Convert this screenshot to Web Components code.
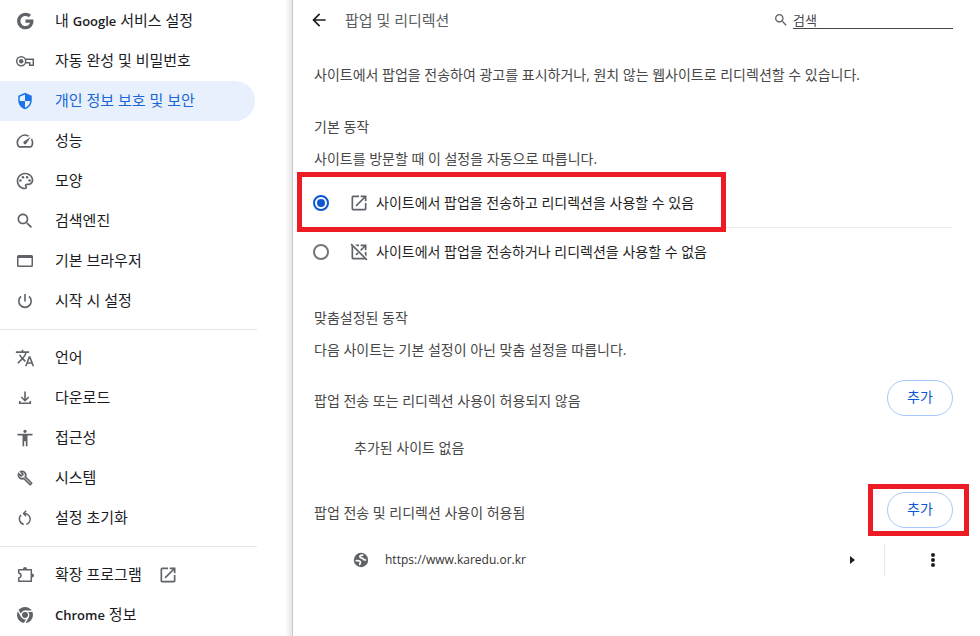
<!DOCTYPE html>
<html lang="ko">
<head>
<meta charset="utf-8">
<title>설정 - 팝업 및 리디렉션</title>
<style>
  html, body { height: 100%; }
  body {
    margin: 0;
    background: #fff;
    color: #1f1f1f;
    font-family: "Open Sans", "Noto Sans CJK KR", sans-serif;
    font-size: 14px;
    line-height: 20px;
    overflow: hidden;
  }
  menu-item b { font-size: 13px; font-weight: 600; }
</style>
</head>
<body>
<settings-app>
  <settings-menu slot="menu">
    <menu-item icon="google">내 <b>Google</b> 서비스 설정</menu-item>
    <menu-item icon="key">자동 완성 및 비밀번호</menu-item>
    <menu-item icon="shield" active>개인 정보 보호 및 보안</menu-item>
    <menu-item icon="speed">성능</menu-item>
    <menu-item icon="palette">모양</menu-item>
    <menu-item icon="search">검색엔진</menu-item>
    <menu-item icon="browser">기본 브라우저</menu-item>
    <menu-item icon="power">시작 시 설정</menu-item>
    <menu-divider></menu-divider>
    <menu-item icon="translate">언어</menu-item>
    <menu-item icon="download">다운로드</menu-item>
    <menu-item icon="accessibility">접근성</menu-item>
    <menu-item icon="wrench">시스템</menu-item>
    <menu-item icon="reset">설정 초기화</menu-item>
    <menu-divider></menu-divider>
    <menu-item icon="extension" external>확장 프로그램</menu-item>
    <menu-item icon="chrome"><b>Chrome</b> 정보</menu-item>
  </settings-menu>

  <page-header>팝업 및 리디렉션</page-header>
  <page-intro>사이트에서 팝업을 전송하여 광고를 표시하거나, 원치 않는 웹사이트로 리디렉션할 수 있습니다.</page-intro>
  <settings-section heading="기본 동작" note="사이트를 방문할 때 이 설정을 자동으로 따릅니다.">
    <popup-choice></popup-choice>
  </settings-section>
  <settings-section heading="맞춤설정된 동작" note="다음 사이트는 기본 설정이 아닌 맞춤 설정을 따릅니다.">
    <site-list heading="팝업 전송 또는 리디렉션 사용이 허용되지 않음">
      <empty-note>추가된 사이트 없음</empty-note>
    </site-list>
    <site-list heading="팝업 전송 및 리디렉션 사용이 허용됨" marked>
      <site-row>https://www.karedu.or.kr</site-row>
    </site-list>
  </settings-section>
</settings-app>

<script>
const ICONS = {
  google: '<svg viewBox="0 0 24 24"><path d="M12.545 10.239v3.821h5.445c-.712 2.315-2.647 3.972-5.445 3.972-3.332 0-6.033-2.701-6.033-6.032s2.701-6.032 6.033-6.032c1.498 0 2.866.549 3.921 1.453l2.814-2.814C17.503 2.988 15.139 2 12.545 2 7.021 2 2.543 6.477 2.543 12s4.478 10 10.002 10c8.396 0 10.249-7.85 9.426-11.748z"/></svg>',
  key: '<svg viewBox="0 0 20 20"><g fill="none" stroke="currentColor" stroke-width="1.500"><path d="M10.400 8.200H18.300V14.300H14.700V11.800H10.400"/><circle cx="6.200" cy="10.300" r="4.500"/></g><circle cx="6.200" cy="10.300" r="2.200"/></svg>',
  shield: '<svg viewBox="0 0 24 24"><path transform="translate(1.200 1.200) scale(.9)" d="M12 1L3 5v6c0 5.550 3.840 10.740 9 12 5.160-1.260 9-6.450 9-12V5l-9-4zm0 10.990h7c-.53 4.120-3.280 7.790-7 8.940V12H5V6.300l7-3.110v8.800z"/></svg>',
  speed: '<svg viewBox="0 0 24 24"><path d="M20.380 8.570l-1.230 1.850a8 8 0 0 1-.22 7.580H5.070A8 8 0 0 1 15.580 6.850l1.850-1.230A10 10 0 0 0 3.350 19a2 2 0 0 0 1.720 1h13.850a2 2 0 0 0 1.740-1 10 10 0 0 0-.27-10.440z"/><path d="M10.590 15.410a2 2 0 0 0 2.830 0l5.660-8.490-8.490 5.660a2 2 0 0 0 0 2.830z"/></svg>',
  palette: '<svg viewBox="0 0 24 24"><path d="M12 22C6.490 22 2 17.510 2 12S6.490 2 12 2s10 4.040 10 9c0 3.310-2.690 6-6 6h-1.770c-.28 0-.5.22-.5.5 0 .12.05.23.13.33.41.47.64 1.060.64 1.670A2.500 2.500 0 0 1 12 22zm0-18c-4.410 0-8 3.590-8 8s3.590 8 8 8c.28 0 .5-.22.5-.5a.54.54 0 0 0-.14-.35c-.41-.46-.63-1.050-.63-1.650a2.500 2.500 0 0 1 2.500-2.500H16c2.210 0 4-1.790 4-4 0-3.860-3.590-7-8-7z"/><circle cx="6.500" cy="11.500" r="1.500"/><circle cx="9.500" cy="7.500" r="1.500"/><circle cx="14.500" cy="7.500" r="1.500"/><circle cx="17.500" cy="11.500" r="1.500"/></svg>',
  search: '<svg viewBox="0 0 24 24"><path d="M15.500 14h-.79l-.28-.27C15.410 12.590 16 11.110 16 9.500 16 5.910 13.090 3 9.500 3S3 5.910 3 9.500 5.910 16 9.500 16c1.610 0 3.090-.59 4.230-1.570l.27.28v.79l5 4.990L20.490 19l-4.990-5zm-6 0C7.010 14 5 11.990 5 9.500S7.010 5 9.500 5 14 7.010 14 9.500 11.990 14 9.500 14z"/></svg>',
  browser: '<svg viewBox="0 0 20 20"><path fill-rule="evenodd" d="M3.500 4h13A1.500 1.500 0 0 1 18 5.500v9a1.500 1.500 0 0 1-1.500 1.500h-13A1.500 1.500 0 0 1 2 14.500v-9A1.500 1.500 0 0 1 3.500 4zM3.500 7v7.500h13V7z"/></svg>',
  power: '<svg viewBox="0 0 20 20"><path fill="none" stroke="currentColor" stroke-width="1.600" d="M10 3v7.500M6 5.400A6.200 6.200 0 1 0 14 5.400"/></svg>',
  translate: '<svg viewBox="0 0 24 24"><path d="M12.870 15.070l-2.540-2.510.03-.03c1.740-1.940 2.980-4.170 3.710-6.530H17V4h-7V2H8v2H1v1.990h11.170C11.500 7.920 10.440 9.750 9 11.350 8.070 10.320 7.300 9.190 6.690 8h-2c.73 1.630 1.730 3.170 2.980 4.560l-5.090 5.020L4 19l5-5 3.110 3.110.76-2.040zM18.500 10h-2L12 22h2l1.120-3h4.750L21 22h2l-4.500-12zm-2.620 7l1.620-4.330L19.120 17h-3.240z"/></svg>',
  download: '<svg viewBox="0 0 20 20"><path fill="none" stroke="currentColor" stroke-width="1.600" d="M10 3.500v9M6.300 9l3.700 3.700L13.700 9M4.700 13v2.300h10.600V13"/></svg>',
  accessibility: '<svg viewBox="0 0 24 24"><path d="M12 2c1.100 0 2 .9 2 2s-.9 2-2 2-2-.9-2-2 .9-2 2-2zm9 7h-6v13h-2v-6h-2v6H9V9H3V7h18v2z"/></svg>',
  wrench: '<svg viewBox="0 0 24 24"><path stroke="currentColor" stroke-width=".6" d="M22.610 18.990l-9.080-9.080c.93-2.340.45-5.100-1.440-7C9.790.61 6.210.4 3.660 2.260L7.500 6.110 6.080 7.520 2.250 3.690C.39 6.230.6 9.820 2.900 12.110c1.860 1.860 4.570 2.350 6.890 1.480l9.110 9.110c.39.39 1.020.39 1.410 0l2.300-2.300c.4-.38.4-1.010 0-1.410zm-3 1.600l-9.460-9.460c-.61.45-1.290.72-2 .82-1.360.2-2.790-.21-3.830-1.250C3.370 9.760 2.930 8.500 3 7.260l3.090 3.090 4.240-4.240-3.090-3.090c1.240-.07 2.490.37 3.440 1.310 1.080 1.080 1.490 2.570 1.240 3.960-.12.71-.42 1.370-.88 1.960l9.450 9.450-.88.89z" transform="translate(2.500 2.500) scale(.8)"/></svg>',
  reset: '<svg viewBox="0 0 20 20"><path fill="none" stroke="currentColor" stroke-width="1.500" d="M8.800 16.400A5.600 5.600 0 0 1 6 7M9 5.500A5.600 5.600 0 0 1 11.300 16.400M11.200 2.800L8.500 5.500 11.200 8.200"/></svg>',
  extension: '<svg viewBox="0 0 20 20"><path fill="none" stroke="currentColor" stroke-width="1.500" stroke-linejoin="round" d="M3.700 4.700H16.300V16.300H3.700V13Q6 12.500 6 10.500T3.700 8z"/><path d="M8 4a2 2 0 0 1 4 0zM17 8.500a2 2 0 0 1 0 4z"/></svg>',
  chrome: '<svg viewBox="0 0 20 20"><circle cx="10" cy="10" r="8"/><g fill="none" stroke="#fff" stroke-width="1.400"><circle cx="10" cy="10" r="3.700"/><path d="M10 6.300h8M6.800 11.850L2.800 4.920M13.200 11.850L9.200 18.780"/></g></svg>',
  open: '<svg viewBox="0 0 24 24"><path d="M19 19H5V5h7V3H5a2 2 0 0 0-2 2v14a2 2 0 0 0 2 2h14c1.100 0 2-.9 2-2v-7h-2v7zM14 3v2h3.590l-9.830 9.830 1.410 1.410L19 6.410V10h2V3h-7z"/></svg>',
  blocked: '<svg viewBox="0 0 24 24"><path d="M5 6v13h13l2 2H5a2 2 0 0 1-2-2V4zM7.500 3H12v2H9.500zM14 3h7v7h-2V6.410l-4.300 4.300-1.410-1.410L17.590 5H14zM21 12v5.500l-2-2V12zM10.200 12.400l1.410 1.410-2.440 2.430-1.410-1.410z"/><path d="M3.200 1.800L22.200 20.800 20.800 22.200 1.800 3.200z"/></svg>',
  back: '<svg viewBox="0 0 24 24"><path d="M20 11H7.830l5.590-5.590L12 4l-8 8 8 8 1.410-1.410L7.830 13H20v-2z"/></svg>',
  globe: '<svg viewBox="0 0 20 20"><circle cx="10" cy="10" r="7.200"/><g fill="none" stroke="#fff" stroke-width="1.700" stroke-linecap="round" stroke-linejoin="round"><path d="M11.600 5.200C9 5.400 8.600 6.300 9 7.200c.6 1.200 2.800.6 3.300 1.800.3.900 1.100 1 2.300 1"/><path d="M5.300 10.600c1.500.1 3.600-.1 4 .9.400 1.200-.4 1.500-.5 3"/></g></svg>',
  caret: '<svg viewBox="0 0 20 20"><path d="M8 6l5 4-5 4z"/></svg>',
  more: '<svg viewBox="0 0 20 20"><circle cx="10" cy="5" r="2"/><circle cx="10" cy="10" r="2"/><circle cx="10" cy="15" r="2"/></svg>'
};

function define(name, render) {
  customElements.define(name, class extends HTMLElement {
    connectedCallback() {
      if (this.shadowRoot) return;
      const t = document.createElement('template');
      t.innerHTML = render(this);
      this.attachShadow({ mode: 'open' }).append(t.content.cloneNode(true));
    }
  });
}

define('ui-icon', el => `
  <style>
    :host { display: block; flex: none; width: var(--icon-size, 20px); height: var(--icon-size, 20px); }
    svg { display: block; width: 100%; height: 100%; fill: currentColor; }
  </style>${ICONS[el.getAttribute('name')]}`);

define('settings-app', () => `
  <style>
    :host { display: grid; grid-template-columns: 293px minmax(0, 1fr); min-height: 100vh; }
    aside {
      box-sizing: border-box;
      border-right: 1px solid #c8c8c8;
      background: linear-gradient(to left, #e6e6e6, #fff 7px);
    }
    main { padding: 0 27px 0 20px; }
  </style>
  <aside><slot name="menu"></slot></aside>
  <main><slot></slot></main>`);

define('settings-menu', () => `
  <style>
    :host { display: block; padding-top: 1px; }
    nav { display: flex; flex-direction: column; }
  </style>
  <nav aria-label="설정"><slot></slot></nav>`);

define('menu-item', el => `
  <style>
    :host { display: block; margin-right: 37px; font-size: 15px; font-weight: 400; color: #1b1c1f; }
    a {
      display: flex; align-items: center; gap: 20px;
      height: 40px; padding-left: 15px;
      border-radius: 0 20px 20px 0;
      color: inherit; text-decoration: none; white-space: nowrap;
    }
    span { padding-bottom: 2px; }
    ui-icon { color: #5f6368; }
    .external { margin-left: -4px; }
    :host([active]) a { background: #e8f0fe; color: #1967d2; }
    :host([active]) ui-icon { color: #1a73e8; }
  </style>
  <a href="#"${el.hasAttribute('active') ? ' aria-current="page"' : ''}>
    <ui-icon name="${el.getAttribute('icon')}"></ui-icon>
    <span><slot></slot></span>
    ${el.hasAttribute('external') ? '<ui-icon class="external" name="open"></ui-icon>' : ''}
  </a>`);

define('menu-divider', () => `
  <style>:host { display: block; height: 1px; margin: 8px 35px 8px 0; background: #e6e6e6; }</style>`);

define('page-header', () => `
  <style>
    :host { display: flex; align-items: center; height: 40px; }
    button { display: flex; margin: 0 16px 0 -4px; padding: 0; border: 0; background: none; color: #1f1f1f; }
    h1 { flex: 1; margin: 0; font-size: 15px; font-weight: 400; color: #5a5d61; }
    label { display: flex; align-items: center; gap: 4px; color: #5f6368; --icon-size: 16px; }
    input {
      box-sizing: border-box; width: 160px; height: 18px; margin: 0; padding: 0;
      border: 0; border-bottom: 1px solid #474747; border-radius: 0; outline: 0;
      background: none; font: inherit; font-size: 13px; line-height: 16px; color: #474747;
    }
    input::placeholder { color: #474747; opacity: 1; }
  </style>
  <button type="button" aria-label="뒤로"><ui-icon name="back"></ui-icon></button>
  <h1><slot></slot></h1>
  <label><ui-icon name="search"></ui-icon><input type="search" placeholder="검색" aria-label="검색"></label>`);

define('page-intro', () => `
  <style>:host { display: block; padding: 25px 0 0 1px; color: #474747; }</style><slot></slot>`);

define('settings-section', el => `
  <style>
    :host { display: block; padding-top: 32px; }
    h2, p { margin: 0; padding-left: 1px; font-size: 14px; font-weight: 400; color: #474747; }
    p { margin: 12px 0 10px; }
  </style>
  <section>
    <h2>${el.getAttribute('heading')}</h2>
    <p>${el.getAttribute('note')}</p>
    <slot></slot>
  </section>`);

define('popup-choice', () => `
  <style>
    :host { display: block; }
    fieldset { margin: 0; padding: 0; border: 0; }
    .row { position: relative; }
    .row + .row { border-top: 1px solid #ececec; }
    label { display: flex; align-items: center; height: 48px; }
    span { padding-bottom: 1px; }
    input {
      appearance: none; box-sizing: border-box; display: grid; place-items: center;
      width: 16px; height: 16px; margin: 0 20px 0 0; border: 2px solid #747775; border-radius: 50%;
    }
    input:checked { border-color: #0b57d0; }
    input:checked::before { content: ""; width: 8px; height: 8px; border-radius: 50%; background: #0b57d0; }
    ui-icon { color: #5f6368; margin-right: 7px; }
    .mark { position: absolute; inset: -7px auto -5px -16px; width: 419px; border: 5px solid #ed1c24; z-index: 1; pointer-events: none; }
  </style>
  <fieldset aria-label="기본 동작">
    <div class="row">
      <label><input type="radio" name="popup" checked><ui-icon name="open"></ui-icon><span>사이트에서 팝업을 전송하고 리디렉션을 사용할 수 있음</span></label>
      <div class="mark"></div>
    </div>
    <div class="row">
      <label><input type="radio" name="popup"><ui-icon name="blocked"></ui-icon><span>사이트에서 팝업을 전송하거나 리디렉션을 사용할 수 없음</span></label>
    </div>
  </fieldset>`);

define('site-list', el => `
  <style>
    :host { display: block; padding-top: 6px; }
    header { display: flex; align-items: center; justify-content: space-between; height: 44px; }
    h3 { margin: 0; padding: 6px 0 0 1px; font-size: 14px; font-weight: 400; color: #474747; }
    .action { position: relative; }
    button {
      display: block; box-sizing: border-box; width: 66px; height: 36px; margin: 0; padding: 0 0 2px;
      border: 1px solid #a8c7fa; border-radius: 18px; background: #fff;
      color: #0b57d0; font: inherit;
    }
    .mark { position: absolute; inset: -8px -16px -8px -19px; border: 5px solid #ed1c24; pointer-events: none; }
  </style>
  <header>
    <h3>${el.getAttribute('heading')}</h3>
    <div class="action">
      <button type="button">추가</button>
      ${el.hasAttribute('marked') ? '<div class="mark"></div>' : ''}
    </div>
  </header>
  <slot></slot>`);

define('empty-note', () => `
  <style>:host { display: block; padding: 18px 0 24px 41px; color: #474747; }</style><slot></slot>`);

define('site-row', () => `
  <style>
    :host { display: flex; align-items: center; height: 48px; padding: 4px 10px 0 38px; font-size: 12px; color: #333; }
    ui-icon { color: #5f6368; margin-right: 14px; }
    span { flex: 1; }
    button { display: flex; margin: 0; padding: 0; border: 0; background: none; }
    button ui-icon { color: #1f1f1f; margin: 0; }
    hr { width: 1px; height: 32px; margin: 0 38px 0 22px; border: 0; background: #e8e8e8; }
  </style>
  <ui-icon name="globe"></ui-icon>
  <span><slot></slot></span>
  <button type="button" aria-label="세부정보"><ui-icon name="caret"></ui-icon></button>
  <hr>
  <button type="button" aria-label="추가 작업"><ui-icon name="more"></ui-icon></button>`);
</script>
</body>
</html>
